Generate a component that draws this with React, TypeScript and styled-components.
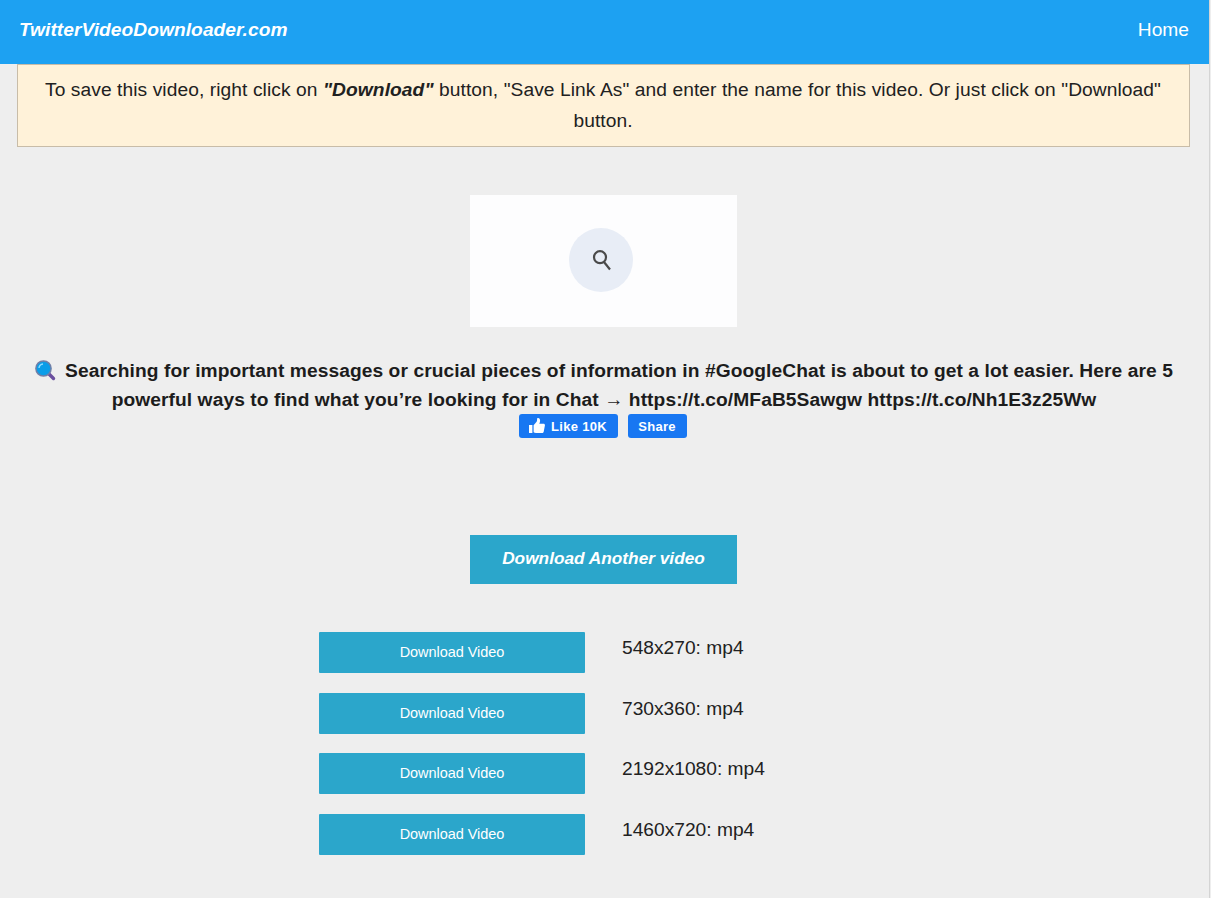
import styled, { createGlobalStyle } from "styled-components";

const GlobalStyle = createGlobalStyle`
  html, body {
    margin: 0;
    padding: 0;
    height: 100%;
    overflow: hidden;
    background-color: #eeeeee;
    font-family: "Liberation Sans", Arial, sans-serif;
    color: #212121;
  }
`;

const Page = styled.div`
  width: 1209px;
  height: 898px;
  border-right: 1px solid #d4d4d4;
  display: flex;
  flex-direction: column;
  align-items: center;
`;

const Navbar = styled.header`
  width: 100%;
  height: 64px;
  flex-shrink: 0;
  box-sizing: border-box;
  padding: 0 20px 4px 19px;
  display: flex;
  justify-content: space-between;
  align-items: center;
  background-color: #1da1f2;
  color: #ffffff;
`;

const Brand = styled.a`
  font-size: 19.2px;
  font-weight: bold;
  font-style: italic;
  letter-spacing: 0.05px;
`;

const NavLink = styled.a`
  font-size: 19.2px;
`;

const Notice = styled.div`
  box-sizing: border-box;
  width: 1173px;
  height: 83px;
  margin-right: 3px;
  padding: 9px 20px 0;
  border: 1px solid #c8bca8;
  background-color: #fff2d9;
  font-size: 19.2px;
  line-height: 31px;
  letter-spacing: 0.08px;
  text-align: center;
`;

const Thumbnail = styled.div`
  width: 267px;
  height: 132px;
  margin: 48px 2px 0 0;
  display: flex;
  align-items: center;
  justify-content: center;
  background-color: #fdfdfe;
`;

const ThumbCircle = styled.div`
  width: 64px;
  height: 64px;
  margin: 0 6px 2px 0;
  border-radius: 50%;
  display: flex;
  align-items: center;
  justify-content: center;
  background-color: #e8edf6;
`;

const Tweet = styled.h1`
  width: 1150px;
  margin: 29px 1px 0 0;
  font-size: 19.2px;
  font-weight: bold;
  line-height: 29px;
  letter-spacing: 0.08px;
  text-align: center;
  color: #1c1c1c;
`;

const TweetIcon = styled.svg`
  width: 21px;
  height: 21px;
  margin-right: 9px;
  vertical-align: -4px;
`;

const SocialRow = styled.div`
  display: flex;
  gap: 10px;
  margin: 0 4px 0 0;
`;

const SocialButton = styled.button<{ $width: number }>`
  width: ${(props) => props.$width}px;
  height: 24px;
  padding: 0;
  border: 0;
  border-radius: 3px;
  display: flex;
  align-items: center;
  justify-content: center;
  gap: 6px;
  background-color: #1877f2;
  color: #ffffff;
  font-family: "Liberation Sans", Arial, sans-serif;
  font-size: 13px;
  font-weight: bold;
  letter-spacing: 0.3px;
`;

const AnotherButton = styled.a`
  width: 267px;
  height: 49px;
  box-sizing: border-box;
  padding-bottom: 2px;
  margin: 97px 2px 0 0;
  display: flex;
  align-items: center;
  justify-content: center;
  background-color: #2ba6cb;
  color: #ffffff;
  font-size: 17.28px;
  font-weight: bold;
  font-style: italic;
`;

const VideoList = styled.div`
  width: 570px;
  margin-top: 48px;
  margin-right: 1px;
  display: flex;
  flex-direction: column;
  gap: 19.67px;
`;

const VideoRow = styled.div`
  display: flex;
  align-items: flex-start;
  gap: 37px;
`;

const VideoButton = styled.a`
  width: 266px;
  height: 41px;
  box-sizing: border-box;
  padding-bottom: 1px;
  border-radius: 1px;
  display: flex;
  align-items: center;
  justify-content: center;
  background-color: #2ba6cb;
  color: #ffffff;
  font-size: 14.5px;
  letter-spacing: -0.05px;
`;

const VideoLabel = styled.span`
  font-size: 19.2px;
  line-height: 32px;
`;

const videos = ["548x270: mp4", "730x360: mp4", "2192x1080: mp4", "1460x720: mp4"];

export default function App() {
  return (
    <>
      <GlobalStyle />
      <Page>
        <Navbar>
          <Brand>TwitterVideoDownloader.com</Brand>
          <NavLink>Home</NavLink>
        </Navbar>

        <Notice>
          To save this video, right click on <b><i>"Download"</i></b> button, "Save Link As" and enter the name for this
          video. Or just click on "Download" button.
        </Notice>

        <Thumbnail>
          <ThumbCircle>
            <svg width="24" height="24" viewBox="0 0 24 24" fill="none" stroke="#4a4a4a" strokeWidth="2.2">
              <circle cx="11" cy="9.2" r="6" />
              <path d="M15 14 L21 21.5" />
            </svg>
          </ThumbCircle>
        </Thumbnail>

        <Tweet>
          <TweetIcon viewBox="0 0 21 21">
            <path d="M13 13 L18.5 18.5" stroke="#6b4f9e" strokeWidth="3.4" strokeLinecap="round" />
            <circle cx="8.5" cy="8.5" r="7.6" fill="#0b9de8" stroke="#6f7fa8" strokeWidth="1.5" />
            <path d="M4 8 A4.5 4.5 0 0 1 8 4" fill="none" stroke="#8fdcff" strokeWidth="1.4" />
          </TweetIcon>
          Searching for important messages or crucial pieces of information in #GoogleChat is about to get a lot easier.
          Here are 5 powerful ways to find what you’re looking for in Chat → https://t.co/MFaB5Sawgw https://t.co/Nh1E3z25Ww
        </Tweet>

        <SocialRow>
          <SocialButton $width={99}>
            <svg width="16" height="16" viewBox="0 0 16 16" fill="#ffffff">
              <path d="M0 7h3.4v8H0z" />
              <path d="M4.6 7.2 7.4 4c.6-.8.7-1.6.7-3 0-.6.4-1 1-1 1.3 0 2 1.3 2 2.8 0 1-.3 2-.8 3h4.2c1 0 1.6.8 1.4 1.7l-1.2 6.2c-.2.8-.8 1.3-1.6 1.3H7c-1 0-1.7-.3-2.4-.8z" />
            </svg>
            Like 10K
          </SocialButton>
          <SocialButton $width={59}>Share</SocialButton>
        </SocialRow>

        <AnotherButton>Download Another video</AnotherButton>

        <VideoList>
          {videos.map((label) => (
            <VideoRow key={label}>
              <VideoButton>Download Video</VideoButton>
              <VideoLabel>{label}</VideoLabel>
            </VideoRow>
          ))}
        </VideoList>
      </Page>
    </>
  );
}
